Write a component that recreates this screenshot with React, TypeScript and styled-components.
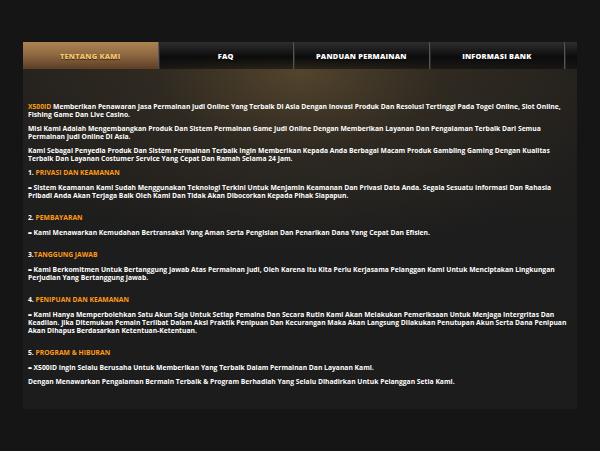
import React from 'react';
import styled, { createGlobalStyle } from 'styled-components';

const GlobalStyle = createGlobalStyle`
  html, body {
    margin: 0;
    padding: 0;
    background: #151515;
  }
  body {
    font-family: "Open Sans", "DejaVu Sans", sans-serif;
  }
`;

const tabs = ['TENTANG KAMI', 'FAQ', 'PANDUAN PERMAINAN', 'INFORMASI BANK'];

const Page = styled.div`
  padding: 42px 23px 0 23px;
  width: 554px;
`;

const Frame = styled.div`
  height: 367px;
  background:
    radial-gradient(ellipse 320px 180px at 50% 30px, rgba(115, 92, 55, 0.6) 0%, rgba(70, 58, 40, 0.35) 45%, rgba(30, 30, 30, 0) 100%),
    linear-gradient(#24211d 0%, #1d1d1d 55%, #1c1c1c 100%);
`;

const TabBar = styled.div`
  display: flex;
  height: 27px;
  background: linear-gradient(#2e2e2e 0%, #0c0c0c 55%, rgba(10, 10, 10, 0.55) 100%);
`;

const Tab = styled.div<{ $active?: boolean }>`
  width: 135px;
  display: flex;
  align-items: center;
  justify-content: center;
  font-size: 7.4px;
  font-weight: 800;
  letter-spacing: 0.2px;
  color: ${p => (p.$active ? '#f3c46a' : '#ffffff')};
  background: ${p =>
    p.$active ? 'linear-gradient(#ad8450 0%, #8c6641 50%, #5b3e26 100%)' : 'transparent'};
  border-right: 1px solid #555;
  box-shadow: 1px 0 0 #2a2a2a;
  text-shadow: 0 1px 1px rgba(0, 0, 0, 0.6);
`;

const TabTail = styled.div`
  width: 12px;
`;

const Content = styled.div`
  padding: 34px 5px 0 5px;
  color: #fff;
  font-size: 6.75px;
  font-weight: 700;
  line-height: 8px;
`;

const Para = styled.p`
  margin: 0 0 6px 0;
`;

const Heading = styled.p<{ $first?: boolean }>`
  margin: ${p => (p.$first ? '0' : '14px')} 0 7px 0;
`;

const Hi = styled.span`
  color: #ff9a1a;
`;

export default function App() {
  return (
    <>
      <GlobalStyle />
      <Page>
        <Frame>
          <TabBar>
            {tabs.map((t, i) => (
              <Tab key={t} $active={i === 0}>{t}</Tab>
            ))}
            <TabTail />
          </TabBar>
          <Content>
            <Para>
              <Hi>X500ID</Hi> Memberikan Penawaran Jasa Permainan Judi Online Yang Terbaik Di Asia Dengan Inovasi Produk Dan Resolusi Tertinggi Pada Togel Online, Slot Online, Fishing Game Dan Live Casino.
            </Para>
            <Para>
              Misi Kami Adalah Mengembangkan Produk Dan Sistem Permainan Game Judi Online Dengan Memberikan Layanan Dan Pengalaman Terbaik Dari Semua Permainan Judi Online Di Asia.
            </Para>
            <Para>
              Kami Sebagai Penyedia Produk Dan Sistem Permainan Terbaik Ingin Memberikan Kepada Anda Berbagai Macam Produk Gambling Gaming Dengan Kualitas Terbaik Dan Layanan Costumer Service Yang Cepat Dan Ramah Selama 24 Jam.
            </Para>
            <Heading $first>1. <Hi>PRIVASI DAN KEAMANAN</Hi></Heading>
            <Para>
              = Sistem Keamanan Kami Sudah Menggunakan Teknologi Terkini Untuk Menjamin Keamanan Dan Privasi Data Anda. Segala Sesuatu Informasi Dan Rahasia Pribadi Anda Akan Terjaga Baik Oleh Kami Dan Tidak Akan Dibocorkan Kepada Pihak Siapapun.
            </Para>
            <Heading>2. <Hi>PEMBAYARAN</Hi></Heading>
            <Para>
              = Kami Menawarkan Kemudahan Bertransaksi Yang Aman Serta Pengisian Dan Penarikan Dana Yang Cepat Dan Efisien.
            </Para>
            <Heading>3.<Hi>TANGGUNG JAWAB</Hi></Heading>
            <Para>
              = Kami Berkomitmen Untuk Bertanggung Jawab Atas Permainan Judi, Oleh Karena Itu Kita Perlu Kerjasama Pelanggan Kami Untuk Menciptakan Lingkungan Perjudian Yang Bertanggung Jawab.
            </Para>
            <Heading>4. <Hi>PENIPUAN DAN KEAMANAN</Hi></Heading>
            <Para>
              = Kami Hanya Memperbolehkan Satu Akun Saja Untuk Setiap Pemaina Dan Secara Rutin Kami Akan Melakukan Pemeriksaan Untuk Menjaga Intergritas Dan Keadilan. Jika Ditemukan Pemain Terlibat Dalam Aksi Praktik Penipuan Dan Kecurangan Maka Akan Langsung Dilakukan Penutupan Akun Serta Dana Penipuan Akan Dihapus Berdasarkan Ketentuan-Ketentuan.
            </Para>
            <Heading>5. <Hi>PROGRAM &amp; HIBURAN</Hi></Heading>
            <Para>
              = X500ID Ingin Selalu Berusaha Untuk Memberikan Yang Terbaik Dalam Permainan Dan Layanan Kami.
            </Para>
            <Para>
              Dengan Menawarkan Pengalaman Bermain Terbaik &amp; Program Berhadiah Yang Selalu Dihadirkan Untuk Pelanggan Setia Kami.
            </Para>
          </Content>
        </Frame>
      </Page>
    </>
  );
}
